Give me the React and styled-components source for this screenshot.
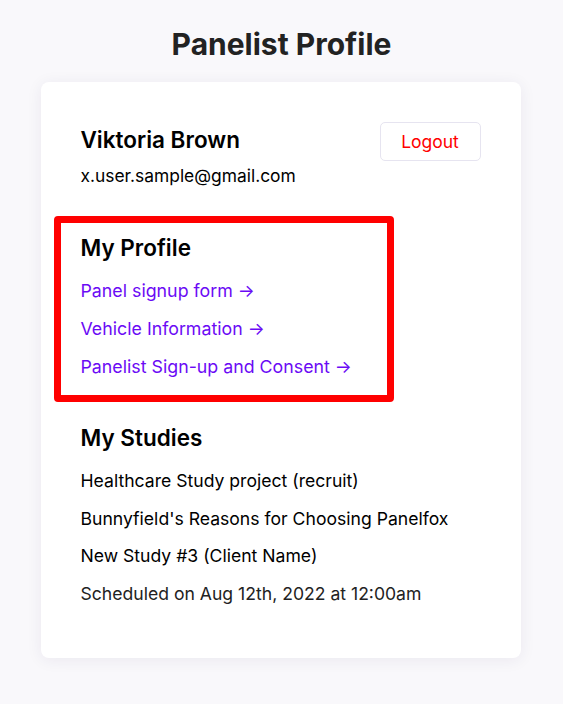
import React from "react";
import styled, { createGlobalStyle } from "styled-components";

const GlobalStyle = createGlobalStyle`
  body {
    margin: 0;
    background: #f9f8fb;
    font-family: Inter, "Noto Sans", sans-serif;
    color: #111;
  }
`;

const links = ["Panel signup form", "Vehicle Information", "Panelist Sign-up and Consent"];
const studies = [
  "Healthcare Study project (recruit)",
  "Bunnyfield's Reasons for Choosing Panelfox",
  "New Study #3 (Client Name)",
];

const App = () => {
  return (
    <Page>
      <GlobalStyle />
      <Title>Panelist Profile</Title>
      <Card>
        <Header>
          <div>
            <Heading>Viktoria Brown</Heading>
            <Email>x.user.sample@gmail.com</Email>
          </div>
          <LogoutButton>Logout</LogoutButton>
        </Header>
        <Highlight>
          <Heading>My Profile</Heading>
          {links.map((l) => (
            <LinkItem key={l} href="#">
              {l} →
            </LinkItem>
          ))}
        </Highlight>
        <Section>
          <Heading>My Studies</Heading>
          {studies.map((s) => (
            <Line key={s}>{s}</Line>
          ))}
          <Line muted>Scheduled on Aug 12th, 2022 at 12:00am</Line>
        </Section>
      </Card>
    </Page>
  );
};

const Page = styled.main`
  display: flex;
  flex-direction: column;
  align-items: center;
  padding-top: 26px;
  min-height: 100vh;
  box-sizing: border-box;
`;

const Title = styled.h1`
  margin: 0 0 20px;
  font-size: 30px;
  line-height: 36px;
  font-weight: 700;
  color: #222;
`;

const Card = styled.div`
  width: 480px;
  box-sizing: border-box;
  background: #fff;
  border-radius: 8px;
  box-shadow: 0 2px 16px rgba(40, 30, 80, 0.07);
  padding: 40px 40px 46px;
  margin-left: -2px;
`;

const Header = styled.div`
  display: flex;
  justify-content: space-between;
  align-items: flex-start;
  margin-bottom: 28px;
`;

const Heading = styled.h2`
  margin: 0 0 6px;
  font-size: 22.5px;
  line-height: 36px;
  font-weight: 600;
  color: #000;
`;

const Email = styled.p`
  margin: 0;
  font-size: 17.4px;
  line-height: 24px;
  color: #000;
`;

const Line = styled.p`
  margin: 0;
  font-size: 17.6px;
  line-height: 37.6px;
  color: ${(p) => (p.muted ? "#222" : "#000")};
`;

const LogoutButton = styled.button`
  width: 101px;
  height: 39px;
  background: #fff;
  border: 1px solid #e6e4f0;
  border-radius: 5px;
  color: #ff0000;
  font-family: inherit;
  font-size: 17.5px;
  cursor: pointer;
`;

const Highlight = styled.section`
  width: 340px;
  box-sizing: border-box;
  margin-left: -27px;
  border: 7px solid #ff0000;
  border-radius: 4px;
  padding: 7px 20px 9px;
  display: flex;
  flex-direction: column;
  align-items: flex-start;
`;

const LinkItem = styled.a`
  font-size: 17.8px;
  line-height: 38px;
  color: #6b0af5;
  text-decoration: none;
`;

const Section = styled.section`
  margin-top: 18px;
`;

export default App;
